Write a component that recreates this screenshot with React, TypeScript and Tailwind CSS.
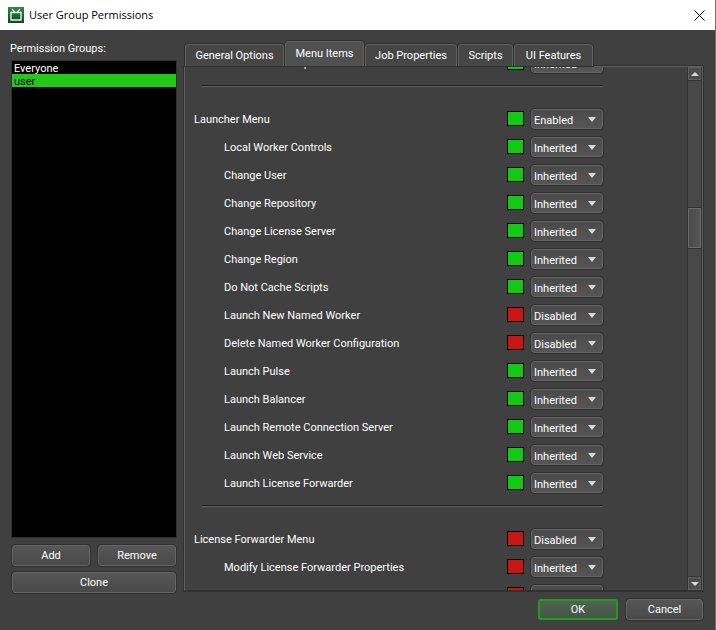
import React from "react";

type Permission = {
  label: string;
  allowed: boolean;
  value: string;
  heading?: boolean;
};

const groups = ["Everyone", "user"];

const tabs = [
  { label: "General Options", width: "w-[99px]" },
  { label: "Menu Items", width: "w-[79px]" },
  { label: "Job Properties", width: "w-[92px]" },
  { label: "Scripts", width: "w-[55px]" },
  { label: "UI Features", width: "w-[79px]" },
];

const sections: Permission[][] = [
  [{ label: "Show Online Help", allowed: true, value: "Inherited" }],
  [
    { label: "Launcher Menu", allowed: true, value: "Enabled", heading: true },
    { label: "Local Worker Controls", allowed: true, value: "Inherited" },
    { label: "Change User", allowed: true, value: "Inherited" },
    { label: "Change Repository", allowed: true, value: "Inherited" },
    { label: "Change License Server", allowed: true, value: "Inherited" },
    { label: "Change Region", allowed: true, value: "Inherited" },
    { label: "Do Not Cache Scripts", allowed: true, value: "Inherited" },
    { label: "Launch New Named Worker", allowed: false, value: "Disabled" },
    { label: "Delete Named Worker Configuration", allowed: false, value: "Disabled" },
    { label: "Launch Pulse", allowed: true, value: "Inherited" },
    { label: "Launch Balancer", allowed: true, value: "Inherited" },
    { label: "Launch Remote Connection Server", allowed: true, value: "Inherited" },
    { label: "Launch Web Service", allowed: true, value: "Inherited" },
    { label: "Launch License Forwarder", allowed: true, value: "Inherited" },
  ],
  [
    { label: "License Forwarder Menu", allowed: false, value: "Disabled", heading: true },
    { label: "Modify License Forwarder Properties", allowed: false, value: "Inherited" },
    { label: "Change License Forwarder", allowed: false, value: "Inherited" },
  ],
];

const buttonStyle =
  "h-[21px] rounded-[3px] border border-[#666] bg-linear-to-b from-[#565656] to-[#494949] pt-px text-center leading-[18px] outline outline-[#303030]";

const PermissionRow = ({ label, allowed, value, heading }: Permission) => {
  const id = label.toLowerCase().replaceAll(" ", "-");
  return (
    <div className={`flex h-7 items-center ${heading ? "pl-[9px]" : "pl-[39px]"}`}>
      <label htmlFor={id} className="flex-1 pt-[2px] whitespace-nowrap">
        {label}
      </label>
      <span
        className={`mr-[7px] mb-px h-[15px] w-[17px] border border-black ${allowed ? "bg-[#16c816]" : "bg-[#c81616]"}`}
      />
      <div className="relative">
        <select
          id={id}
          defaultValue={value}
          className="block h-5 w-[72px] appearance-none rounded-[3px] border border-[#666] bg-linear-to-b from-[#4a4a4a] to-[#565656] pt-[3px] pl-[2px] outline outline-[#303030]"
        >
          <option>Inherited</option>
          <option>Enabled</option>
          <option>Disabled</option>
        </select>
        <svg
          viewBox="0 0 8 5"
          className="pointer-events-none absolute top-2 right-[7px] h-[5px] w-2 fill-[#d8d8d8]"
        >
          <path d="M0 0h8L4 5z" />
        </svg>
      </div>
    </div>
  );
};

const Separator = () => (
  <div className="h-7 pt-2 pl-4">
    <hr className="border-t border-b border-t-[#202020] border-b-[#5c5c5c]" />
  </div>
);

const ScrollBar = () => (
  <div className="flex w-[15px] flex-col border-x border-[#333] bg-[#484848]">
    <button aria-label="Scroll up" className="flex h-[13px] items-center justify-center border border-[#606060] bg-[#4c4c4c]">
      <svg viewBox="0 0 8 4" className="h-1 w-2 fill-[#d8d8d8]">
        <path d="M4 0l4 4H0z" />
      </svg>
    </button>
    <div className="flex flex-1 flex-col border-y border-[#333]">
      <div className="flex-[127]" />
      <div className="h-[42px] border-y border-[#303030]">
        <div className="h-full border border-[#6a6a6a] bg-linear-to-r from-[#4a4a4a] to-[#565656]" />
      </div>
      <div className="flex-[328]" />
    </div>
    <button aria-label="Scroll down" className="flex h-[13px] items-center justify-center border border-[#606060] bg-[#4c4c4c]">
      <svg viewBox="0 0 8 4" className="h-1 w-2 fill-[#d8d8d8]">
        <path d="M0 0h8L4 4z" />
      </svg>
    </button>
  </div>
);

const App = () => {
  return (
    <div className="flex h-screen flex-col border-r border-[#6e6e6e] bg-[#404040] font-[Roboto,'Noto_Sans',sans-serif] text-[11px] text-white">
      <header className="flex h-[30px] items-center bg-white pr-[10px] pl-2 text-black">
        <svg viewBox="0 0 16 16" className="h-4 w-4">
          <defs>
            <linearGradient id="tv" x1="0" y1="0" x2="0" y2="1">
              <stop offset="0" stopColor="#2f8a45" />
              <stop offset="1" stopColor="#0f4a1c" />
            </linearGradient>
          </defs>
          <rect width="16" height="16" fill="url(#tv)" />
          <path
            d="M3 5.5h10v7.5H3z M4 2l3 3.5 M12 2L9 5.5"
            fill="none"
            stroke="#e6f0e6"
            strokeWidth="1.4"
          />
        </svg>
        <h1 className="flex-1 pl-[5px] font-['Open_Sans',sans-serif]">User Group Permissions</h1>
        <button aria-label="Close">
          <svg viewBox="0 0 11 11" className="h-[11px] w-[11px] stroke-black">
            <path d="M.5.5l10 10M10.5.5l-10 10" />
          </svg>
        </button>
      </header>

      <main className="flex min-h-0 flex-1 pt-[11px] pr-3 pl-[10px]">
        <div className="flex w-[167px] flex-col">
          <h2 className="h-[19px] leading-4">Permission Groups:</h2>
          <ul className="ml-px flex-1 border border-[#303030] bg-black">
            {groups.map((group) => (
              <li
                key={group}
                className={`h-[13px] pl-[2px] leading-[15px] ${group === "user" ? "bg-[#24c818] text-black" : ""}`}
              >
                {group}
              </li>
            ))}
          </ul>
          <div className="flex flex-wrap gap-x-2 gap-y-[6px] pt-[7px] pr-px pb-[37px] pl-[2px]">
            <button className={`${buttonStyle} flex-1`}>Add</button>
            <button className={`${buttonStyle} flex-1`}>Remove</button>
            <button className={`${buttonStyle} w-full`}>Clone</button>
          </div>
        </div>

        <div className="flex min-w-0 flex-1 flex-col pl-[7px]">
          <div role="tablist" className="z-10 flex h-[25px] items-end gap-px pl-px">
            {tabs.map(({ label, width }) => (
              <button
                key={label}
                role="tab"
                aria-selected={label === "Menu Items"}
                className={`${width} rounded-t-[3px] border border-b-0 border-[#606060] pt-px whitespace-nowrap outline outline-[#303030] ${
                  label === "Menu Items" ? "h-[25px] bg-[#505050]" : "h-[22px] bg-[#464646]"
                }`}
              >
                {label}
              </button>
            ))}
          </div>
          <section className="flex min-h-0 flex-1 border border-[#606060] border-b-[#303030] outline outline-[#303030]">
            <div className="min-w-0 flex-1 overflow-hidden">
              <div className="-mt-[18px] mr-[84px]">
                {sections.map((rows, i) => (
                  <div key={i}>
                    {i > 0 && <Separator />}
                    {rows.map((row) => (
                      <PermissionRow key={row.label} {...row} />
                    ))}
                  </div>
                ))}
              </div>
            </div>
            <ScrollBar />
          </section>
          <footer className="flex justify-end gap-2 pt-2 pb-[10px]">
            <button className="h-[21px] w-20 rounded-[3px] border-2 border-[#249a24] bg-linear-to-b from-[#506450] to-[#445644] pt-px leading-4">
              OK
            </button>
            <button className={`${buttonStyle} w-[77px]`}>Cancel</button>
          </footer>
        </div>
      </main>
    </div>
  );
};

export default App;
